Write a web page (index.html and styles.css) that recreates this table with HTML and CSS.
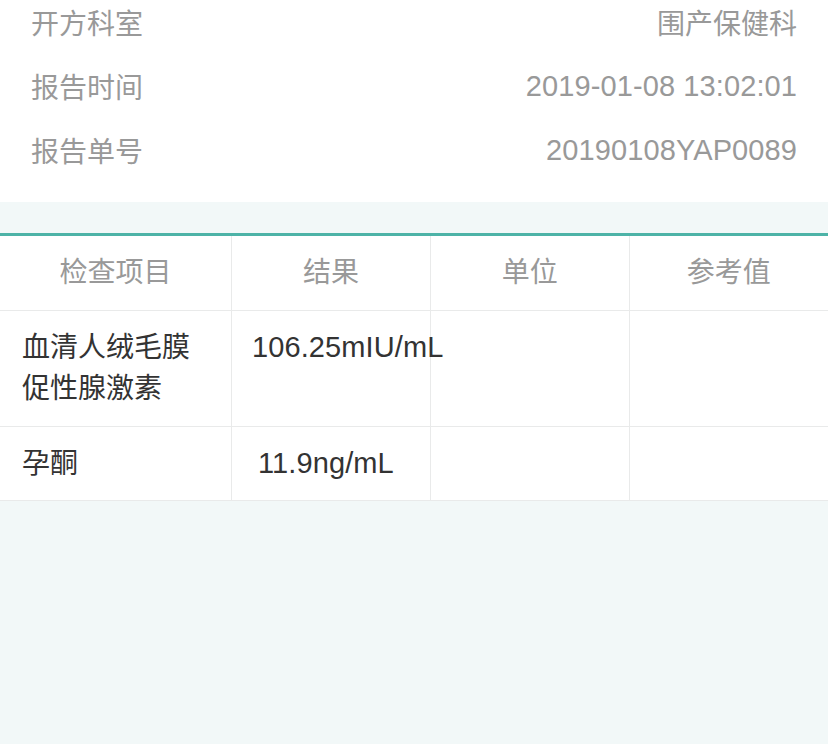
FILE: index.html
```html
<!DOCTYPE html>
<html lang="zh-CN">
<head>
    <meta charset="UTF-8">
    <meta name="viewport" content="width=device-width, initial-scale=1.0">
    <title>检查报告</title>
    <link rel="stylesheet" href="styles.css">
</head>
<body>
    <div class="info">
        <div class="info-row"><span class="label">开方科室</span><span class="value">围产保健科</span></div>
        <div class="info-row"><span class="label">报告时间</span><span class="value num">2019-01-08 13:02:01</span></div>
        <div class="info-row"><span class="label">报告单号</span><span class="value num">20190108YAP0089</span></div>
    </div>

    <div class="gap"></div>

    <table class="result-table">
        <tr>
            <th class="col-name">检查项目</th>
            <th>结果</th>
            <th>单位</th>
            <th>参考值</th>
        </tr>
        <tr>
            <td class="col-name">血清人绒毛膜<br>促性腺激素</td>
            <td class="col-result"><span class="num">106.25mIU/mL</span></td>
            <td></td>
            <td></td>
        </tr>
        <tr class="last">
            <td class="col-name">孕酮</td>
            <td class="col-result"><span class="num">11.9ng/mL</span></td>
            <td></td>
            <td></td>
        </tr>
    </table>
</body>
</html>
```

FILE: styles.css
```css
html, body {
    margin: 0;
    padding: 0;
}
body {
    font-family: "Liberation Sans", "Noto Sans CJK SC", sans-serif;
    font-size: 28px;
    background: #f2f8f8;
    color: #333;
    height: 744px;
    overflow: hidden;
}
.num {
    font-size: 29px;
    letter-spacing: 0.1px;
}
.info {
    background: #fff;
    margin-top: -10px;
    padding: 0 31px 20px 31px;
}
.info-row {
    display: flex;
    justify-content: space-between;
    align-items: center;
    height: 64px;
    color: #999;
}
.gap {
    height: 31px;
    border-bottom: 3px solid #4db3a7;
}
.result-table {
    width: 100%;
    border-collapse: collapse;
    background: #fff;
    table-layout: fixed;
}
.result-table th,
.result-table td {
    border: 1px solid #e9eaea;
    padding: 16px 0 17px 0;
    line-height: 41px;
    vertical-align: top;
    font-weight: normal;
}
.result-table tr.last td {
    padding-bottom: 16px;
}
.result-table tr:first-child th {
    border-top: none;
    color: #999;
    text-align: center;
}
.result-table th:first-child,
.result-table td:first-child {
    border-left: none;
}
.result-table th:last-child,
.result-table td:last-child {
    border-right: none;
}
.col-name {
    width: 231px;
}
td.col-name {
    padding-left: 22px;
    text-align: left;
}
.col-result {
    text-align: center;
    padding-left: 20px !important;
    padding-right: 30px !important;
    white-space: nowrap;
}
```
